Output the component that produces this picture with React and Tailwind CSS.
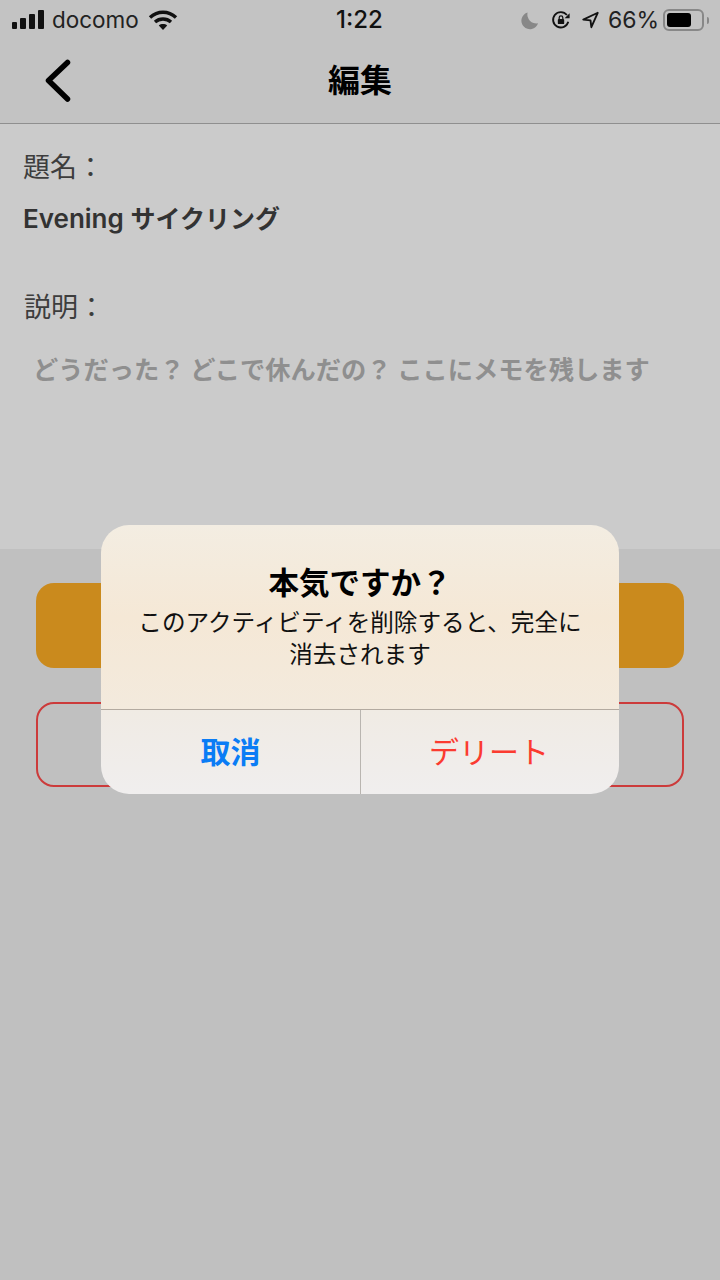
const font = { fontFamily: '"Noto Sans CJK JP", "Liberation Sans", sans-serif' };

const StatusBar = () => (
  <div className="h-10 flex items-center justify-between relative text-[#111]">
    <div className="flex items-center pl-[12px]">
      <div className="flex items-end gap-[3px] h-[20px] mb-[2px]">
        <div className="w-[5px] h-[7px] rounded-[1px] bg-[#111]"></div>
        <div className="w-[6px] h-[11px] rounded-[1px] bg-[#111]"></div>
        <div className="w-[6px] h-[15px] rounded-[1px] bg-[#111]"></div>
        <div className="w-[6px] h-[19px] rounded-[1px] bg-[#111]"></div>
      </div>
      <span className="ml-[8px] text-[22.5px] leading-none text-[#222] font-['Inter']">docomo</span>
      <svg className="ml-[9px]" width="30" height="22" viewBox="0 0 30 22" fill="none" stroke="#111" strokeWidth="3.4">
        <path d="M2 8.5C9.5 1.5 20.5 1.5 28 8.5" />
        <path d="M7 13C11.5 9 18.5 9 23 13" />
        <path d="M15 21L10.8 16.5C13 14.6 17 14.6 19.2 16.5Z" fill="#111" stroke="none" />
      </svg>
    </div>
    <span className="absolute left-[336px] top-[7px] text-[24px] leading-[26px] font-medium font-['Inter'] text-[#111]">1:22</span>
    <div className="flex items-center pr-[11px]">
      <svg width="19" height="19" viewBox="0 0 20 20">
        <path d="M8 1.5A9 9 0 1 0 19 13 A9.5 9.5 0 0 1 8 1.5Z" fill="#888" />
      </svg>
      <svg className="ml-[12px]" width="20" height="20" viewBox="0 0 22 22" fill="none" stroke="#111" strokeWidth="2">
        <path d="M19 13A8.5 8.5 0 1 1 17.5 5.5" />
        <path d="M20.5 3.5V9H15Z" fill="#111" stroke="none" />
        <rect x="7.5" y="10" width="7" height="5.5" rx="1" fill="#111" stroke="none" />
        <path d="M9 10V8.5A2 2 0 0 1 13 8.5V10" strokeWidth="1.4" />
      </svg>
      <svg className="ml-[11px]" width="17" height="18" viewBox="0 0 20 20" fill="none" stroke="#111" strokeWidth="2.2" strokeLinejoin="round">
        <path d="M18.5 1.5L1.5 9.5L10 10.5L11 18.5Z" />
      </svg>
      <span className="ml-[9px] text-[23px] leading-none text-[#222] font-['Inter']">66%</span>
      <div className="ml-[4px] w-[41px] h-[22px] rounded-[6px] border-2 border-[#888] p-[2px]">
        <div className="w-[24px] h-full rounded-[3px] bg-black"></div>
      </div>
      <div className="ml-[3px] w-[2px] h-[7px] rounded-r-sm bg-[#888]"></div>
    </div>
  </div>
);

const App = () => (
  <div className="relative w-[720px] h-[1280px] overflow-hidden bg-[#c0c0c0]" style={font}>
    <div className="h-[124px] bg-[#c3c3c3] border-b border-[#8f8f8f]">
      <StatusBar />
      <div className="relative h-[83px] flex items-center justify-center pb-[7px]">
        <svg className="absolute left-[44px] top-[18px]" width="28" height="46" viewBox="0 0 28 46" fill="none" stroke="#000" strokeWidth="5.5" strokeLinecap="round" strokeLinejoin="round">
          <path d="M23.5 4.5L4.5 22.5L23.5 41" />
        </svg>
        <h1 className="text-[32px] leading-none font-bold text-black">編集</h1>
      </div>
    </div>

    <div className="h-[425px] bg-[#cbcbcb] pl-[23px] pt-[24px]">
      <p className="text-[27px] leading-[36px] text-[#3d3d3d]">題名：</p>
      <p className="mt-[15px] text-[25px] leading-[36px] font-semibold text-[#333]"><span className="text-[26px] font-['Inter']">Evening</span><span className="ml-[1px]"> サイクリング</span></p>
      <p className="mt-[51px] ml-[1px] text-[27px] leading-[36px] text-[#3d3d3d]">説明：</p>
      <p className="mt-[26px] ml-[10px] text-[25.25px] leading-[36px] font-bold text-[#8f8f8f]">どうだった？ どこで休んだの？ ここにメモを残します</p>
    </div>

    <div className="px-[36px] pt-[34px] flex flex-col gap-[34px]">
      <div className="h-[85px] rounded-[18px] bg-[#ca8a1d]"></div>
      <div className="h-[85px] rounded-[18px] border-2 border-[#cc3b3b]"></div>
    </div>

    <div className="absolute left-[101px] top-[525px] w-[518px] h-[269px] rounded-[28px] overflow-hidden flex flex-col">
      <div className="h-[184px] shrink-0 bg-gradient-to-b from-[#f3ede2] via-[#f5e8d6] to-[#f3eadd] flex flex-col items-center pt-[36px]">
        <h2 className="text-[30.5px] leading-[40px] font-bold text-black">本気ですか？</h2>
        <p className="mt-[4px] w-[460px] text-center text-[23.6px] leading-[32px] text-[#111]">このアクティビティを削除すると、完全に消去されます</p>
      </div>
      <div className="flex-1 flex border-t border-[#b3aaa0] bg-gradient-to-b from-[#f0ebe4] to-[#f0eeee]">
        <button className="w-[260px] pb-[4px] border-r border-[#b9b5b0] text-[30px] font-bold text-[#0a7cf5]">取消</button>
        <button className="flex-1 pb-[4px] pr-[2px] text-[30px] text-[#fb3b30]">デリート</button>
      </div>
    </div>
  </div>
);

export default App;
